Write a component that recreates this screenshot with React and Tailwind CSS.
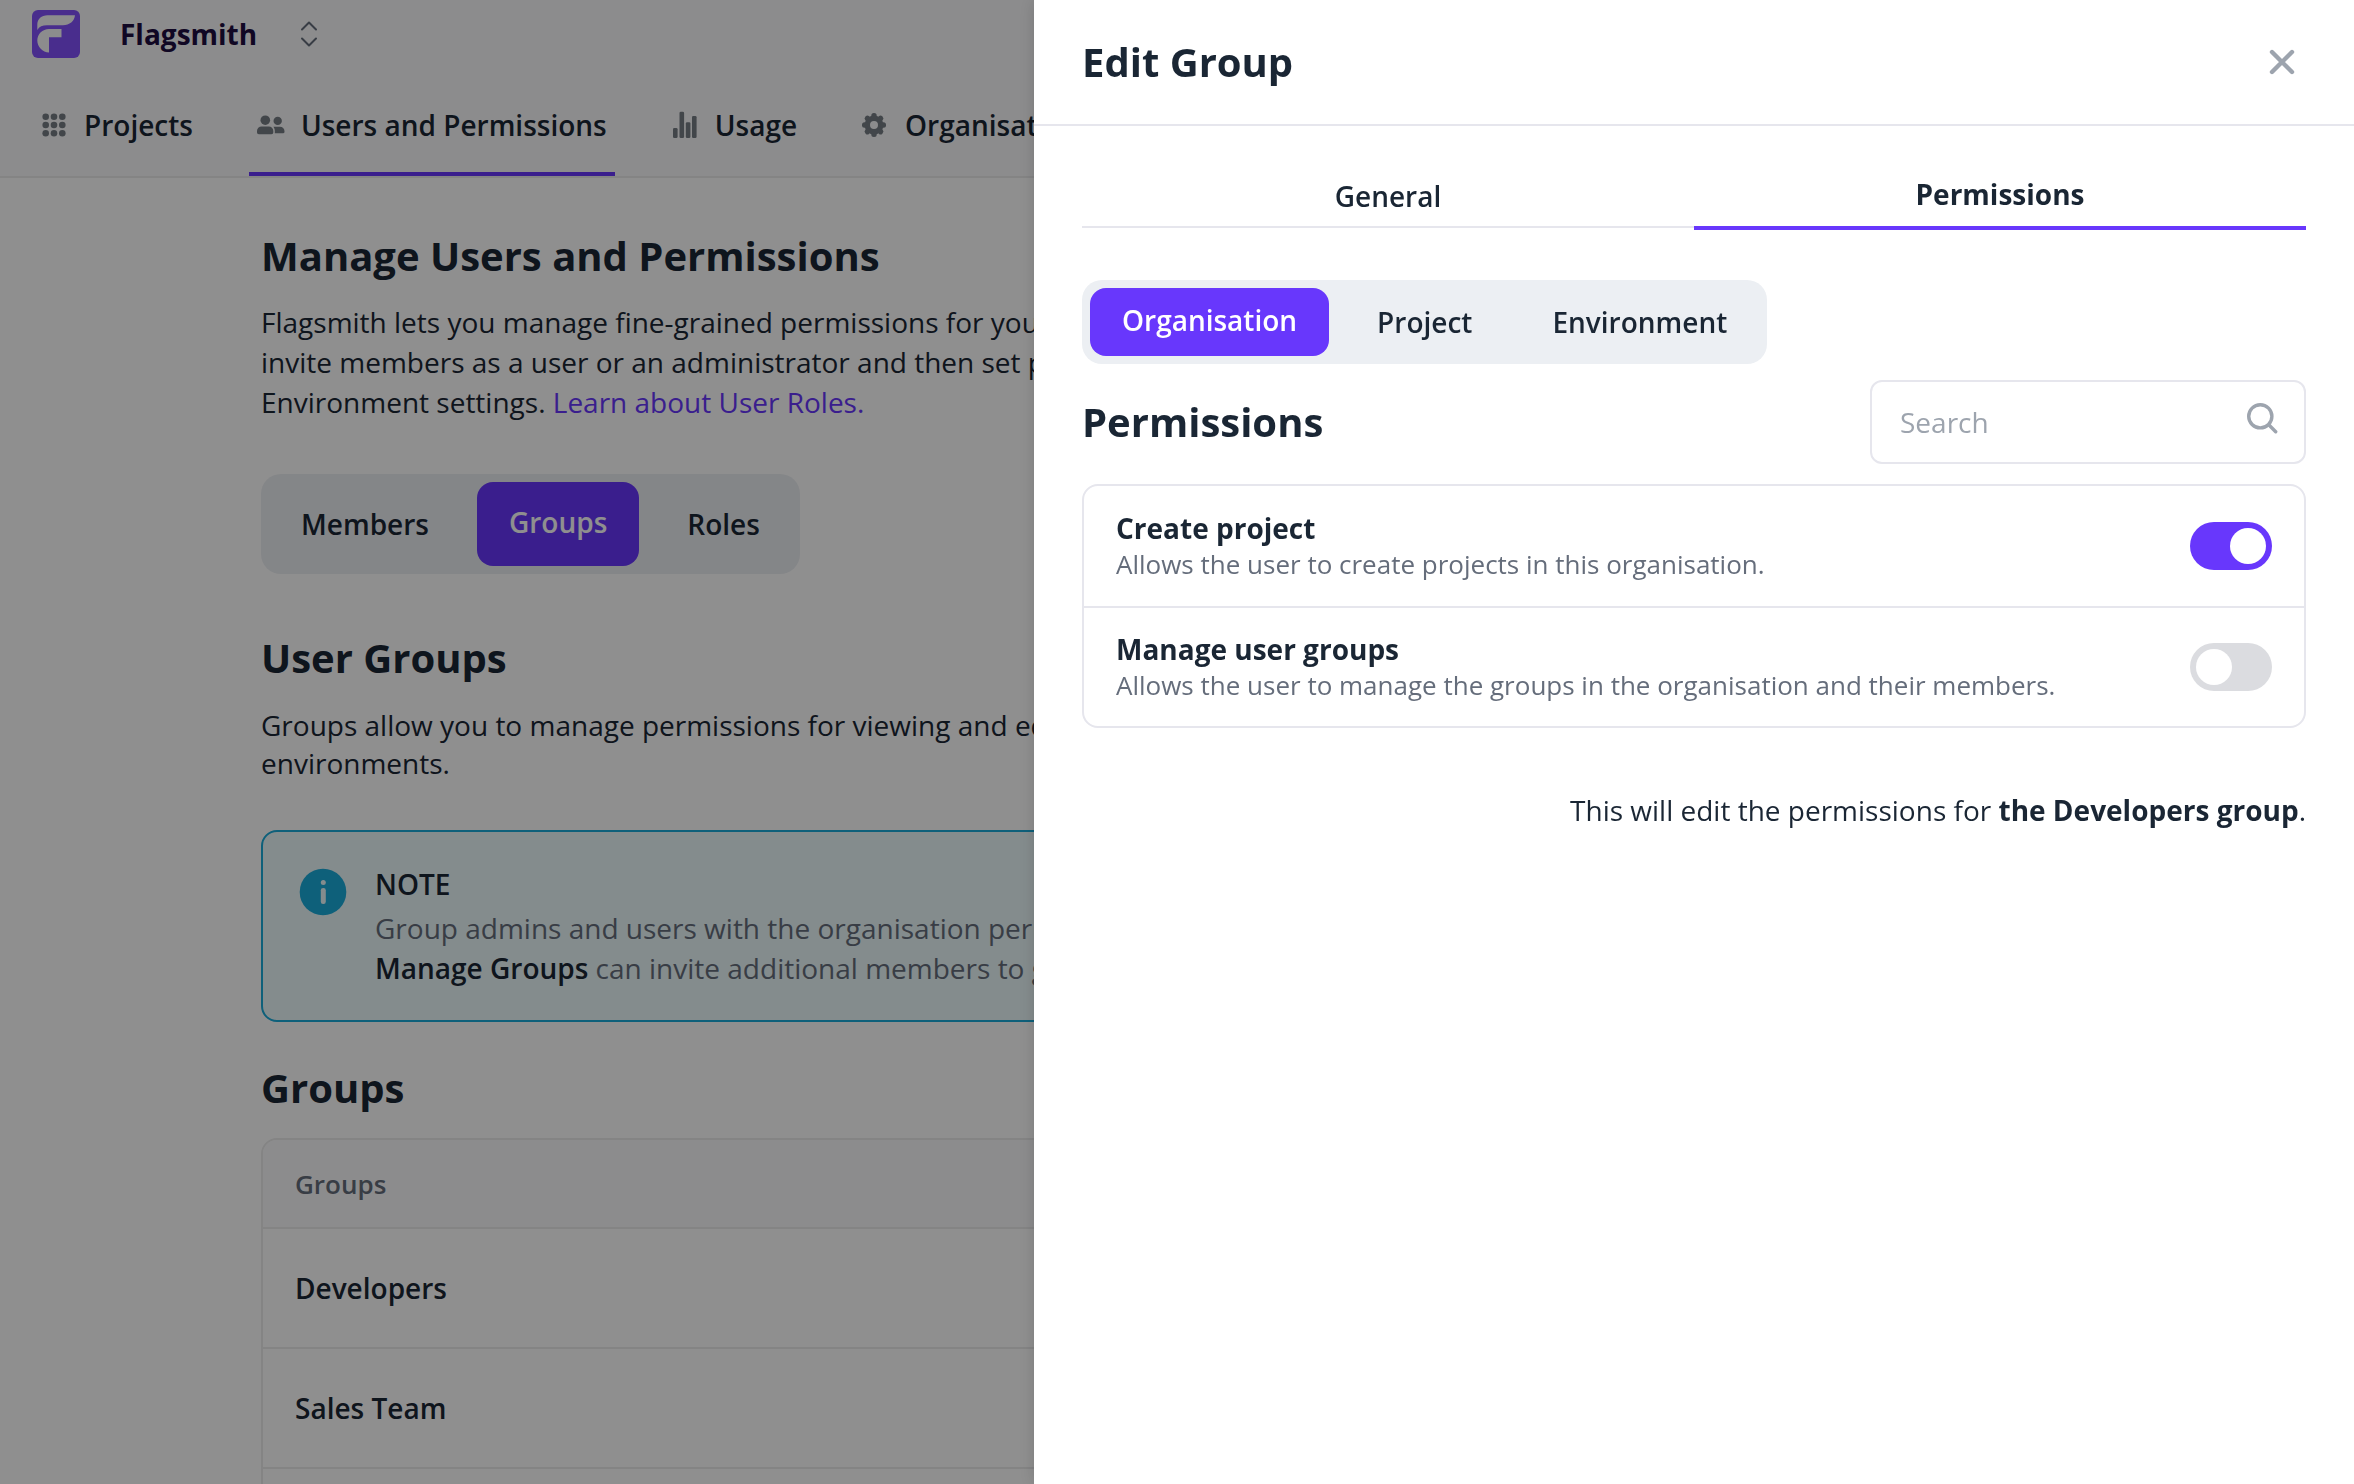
import React, { useState } from "react";

function Logo() {
  return (
    <svg viewBox="0 0 48 48" className="size-12" aria-hidden="true">
      <rect width="48" height="48" rx="6" fill="#8250fc" />
      <path d="M5.3 20v-5.2C5.3 9 9.500 5.300 15.500 5.300H43C42.600 11 37.500 15.300 31 15.300H15C10.500 15.300 7.200 16.600 5.300 20Z" fill="#fafafb" />
      <path d="M29.500 19v8.300H17V42.500C10.500 42.200 5.300 37 5.300 30.500 5.300 24 10.500 19 17 19Z" fill="#fafafb" />
    </svg>
  );
}

function GridIcon() {
  const steps = [5.7, 14, 22.3];
  return (
    <svg viewBox="0 0 28 28" className="size-7" fill="#767d85" aria-hidden="true">
      {steps.map((y) => steps.map((x) => <circle key={`${x}-${y}`} cx={x} cy={y} r="3.3" />))}
    </svg>
  );
}

function UsersIcon() {
  return (
    <svg viewBox="0 0 28 28" className="size-7" fill="#767d85" aria-hidden="true">
      <circle cx="8.3" cy="9.200" r="4.800" />
      <circle cx="20.700" cy="9.900" r="4.200" />
      <path d="M0 21.500v-1.500a4.500 4.500 0 0 1 4.500-4.500h7.300a4.500 4.500 0 0 1 4.500 4.500v1.500a1.800 1.800 0 0 1-1.800 1.800H1.800A1.800 1.800 0 0 1 0 21.500Z" />
      <path d="M16.400 15.700h6.600a4.500 4.500 0 0 1 4.500 4.500v.5a1.500 1.500 0 0 1-1.500 1.500h-8.200v-2.200c0-1.700-.5-3.200-1.400-4.300Z" />
    </svg>
  );
}

function BarsIcon() {
  return (
    <svg viewBox="0 0 28 28" className="size-7" fill="#767d85" aria-hidden="true">
      <rect x="2" y="17" width="4.600" height="10" rx="1.300" />
      <rect x="8.500" y="0.700" width="4.600" height="26.300" rx="1.300" />
      <rect x="14.800" y="11.300" width="4.600" height="15.700" rx="1.300" />
      <rect x="21" y="5" width="4.600" height="22" rx="1.300" />
    </svg>
  );
}

function GearIcon() {
  const teeth = [0, 45, 90, 135, 180, 225, 270, 315];
  return (
    <svg viewBox="0 0 28 28" className="size-7" aria-hidden="true">
      <circle cx="13" cy="14" r="6.700" fill="none" stroke="#767d85" strokeWidth="5.400" />
      {teeth.map((a) => (
        <rect key={a} x="10.300" y="2" width="5.400" height="6" rx="2.500" fill="#767d85" transform={`rotate(${a} 13 14)`} />
      ))}
    </svg>
  );
}

function InfoIcon() {
  return (
    <svg viewBox="0 0 56 56" className="size-14 shrink-0" aria-hidden="true">
      <circle cx="28" cy="28" r="23.300" fill="#1aabda" />
      <circle cx="28.300" cy="18.600" r="2.500" fill="#ecf9fb" />
      <rect x="25.800" y="24" width="5" height="16" rx="2.300" fill="#ecf9fb" />
    </svg>
  );
}

const navItems = [
  { label: "Projects", Icon: GridIcon },
  { label: "Users and Permissions", Icon: UsersIcon, active: true },
  { label: "Usage", Icon: BarsIcon },
  { label: "Organisation Settings", Icon: GearIcon },
];

function Pills({ items, value, onChange, size }) {
  return (
    <div className="flex w-fit gap-4 rounded-[20px] bg-[#eceff3] p-2">
      {items.map((item) => (
        <button
          key={item}
          type="button"
          aria-pressed={item === value}
          onClick={() => onChange(item)}
          className={`${size} rounded-2xl px-8 font-semibold ${
            item === value ? "bg-[#6837fc] pb-1 text-white" : ""
          }`}
        >
          {item}
        </button>
      ))}
    </div>
  );
}

function Page() {
  const [tab, setTab] = useState("Groups");
  return (
    <div className="min-h-full bg-white">
      <header className="border-b-2 border-[#ebebec] bg-[#fafafb] px-8">
        <div className="flex h-[68px] items-center">
          <Logo />
          <span className="ml-10 font-bold text-[#1e0d40]">Flagsmith</span>
          <button type="button" aria-label="Switch organisation" className="ml-[42px]">
            <svg viewBox="0 0 20 28" className="h-7 w-5" fill="none" stroke="#656d7b" strokeWidth="2" strokeLinecap="round" strokeLinejoin="round">
              <path d="M3 9.500 10 2.500l7 7M3 18.500l7 7 7-7" />
            </svg>
          </button>
        </div>
        <nav className="flex h-[108px] gap-12">
          {navItems.map(({ label, Icon, active }) => (
            <a
              key={label}
              href="#"
              className={`flex items-center gap-4 border-b-4 px-2 pt-2.5 font-semibold whitespace-nowrap ${
                active ? "border-[#6837fc]" : "border-transparent"
              }`}
            >
              <Icon />
              {label}
            </a>
          ))}
        </nav>
      </header>
      <main className="mx-auto max-w-[1832px] pt-[54px]">
        <h1 className="text-[40px] leading-12 font-bold">Manage Users and Permissions</h1>
        <p className="mt-[22px] leading-10 whitespace-nowrap">
          Flagsmith lets you manage fine-grained permissions for your
          <br />
          invite members as a user or an administrator and then set permissions
          <br />
          Environment settings.{" "}
          <a href="#" className="text-[#6837fc]">
            Learn about User Roles.
          </a>
        </p>
        <div className="mt-[52px]">
          <Pills items={["Members", "Groups", "Roles"]} value={tab} onChange={setTab} size="h-[84px]" />
        </div>
        <h2 className="mt-[60px] text-[40px] leading-12 font-bold">User Groups</h2>
        <p className="mt-6 leading-[38px] whitespace-nowrap">
          Groups allow you to manage permissions for viewing and editing
          <br />
          environments.
        </p>
        <div className="mt-12 flex gap-6 rounded-2xl border-2 border-[#1aabda] bg-[#ecf9fb] p-8">
          <InfoIcon />
          <div className="leading-10 whitespace-nowrap">
            <div className="font-semibold">NOTE</div>
            <p className="mt-1 text-[#656d7b]">
              Group admins and users with the organisation permission
              <br />
              <strong className="font-semibold text-[#1a2634]">Manage Groups</strong> can invite additional members to groups
            </p>
          </div>
        </div>
        <h2 className="mt-[42px] text-[40px] leading-12 font-bold">Groups</h2>
        <div className="mt-[26px] overflow-hidden rounded-2xl border-2 border-[#ebebec]">
          <table className="w-full text-left">
            <thead className="bg-[#fafafb]">
              <tr className="h-[88px] border-b-2 border-[#ebebec]">
                <th className="px-8 text-[26px] font-semibold text-[#656d7b]">Groups</th>
              </tr>
            </thead>
            <tbody>
              {["Developers", "Sales Team"].map((name) => (
                <tr key={name} className="h-[120px] border-b-2 border-[#ebebec]">
                  <td className="px-8 font-semibold">{name}</td>
                </tr>
              ))}
              <tr className="h-[120px]">
                <td />
              </tr>
            </tbody>
          </table>
        </div>
      </main>
    </div>
  );
}

const permissions = [
  { id: "create-project", title: "Create project", text: "Allows the user to create projects in this organisation.", on: true },
  { id: "manage-groups", title: "Manage user groups", text: "Allows the user to manage the groups in the organisation and their members.", on: false },
];

function PermissionRow({ id, title, text, on }) {
  return (
    <li className="flex min-h-[118px] items-center justify-between border-[#e6e6ed] px-8 not-last:border-b-2 first:min-h-[122px]">
      <label htmlFor={id} className="leading-9">
        <span className="block font-bold">{title}</span>
        <span className="block text-[26px] text-[#656d7b]">{text}</span>
      </label>
      <input
        id={id}
        type="checkbox"
        role="switch"
        defaultChecked={on}
        className="h-12 w-[82px] shrink-0 appearance-none rounded-full bg-[#dbdce0] p-1.5 before:block before:size-9 before:rounded-full before:bg-white checked:bg-[#6837fc] checked:before:ml-auto"
      />
    </li>
  );
}

function EditGroupPanel() {
  const [level, setLevel] = useState("Organisation");
  return (
    <aside role="dialog" aria-label="Edit Group" className="fixed inset-y-0 right-0 w-full max-w-[1320px] overflow-hidden bg-white shadow-[0_0_16px_rgba(0,0,0,0.15)]">
      <div className="flex h-[126px] items-center justify-between border-b-2 border-[#e6e6ed] px-12">
        <h2 className="text-[40px] leading-12 font-bold">Edit Group</h2>
        <button type="button" aria-label="Close" className="p-2">
          <svg viewBox="0 0 32 32" className="size-8" fill="none" stroke="#9da4ae" strokeWidth="4.400" strokeLinecap="round">
            <path d="M6 6l20 20M26 6 6 26" />
          </svg>
        </button>
      </div>
      <div className="px-12 pt-9">
        <div role="tablist" className="grid grid-cols-2 items-start">
          <button type="button" role="tab" aria-selected="false" className="h-[66px] border-b-2 border-[#e6e6ed] pt-1 font-semibold">
            General
          </button>
          <button type="button" role="tab" aria-selected="true" className="h-[68px] border-b-4 border-[#6837fc] font-bold">
            Permissions
          </button>
        </div>
        <div className="mt-[50px]">
          <Pills items={["Organisation", "Project", "Environment"]} value={level} onChange={setLevel} size="h-[68px]" />
        </div>
        <div className="mt-4 flex items-center justify-between">
          <h3 className="text-[40px] leading-12 font-bold">Permissions</h3>
          <div className="relative w-[436px]">
            <input
              type="search"
              aria-label="Search"
              placeholder="Search"
              className="block h-[84px] w-full rounded-xl border-2 border-[#e6e6ed] pr-20 pl-7 placeholder:text-[#9da4ae]"
            />
            <svg viewBox="0 0 32 32" className="pointer-events-none absolute top-[22px] right-7 size-8" fill="none" stroke="#9da4ae" strokeWidth="3.400" strokeLinecap="round" aria-hidden="true">
              <circle cx="14.300" cy="14.300" r="11.600" />
              <path d="M23 23l6.700 6.700" />
            </svg>
          </div>
        </div>
        <ul className="mt-5 rounded-2xl border-2 border-[#e6e6ed]">
          {permissions.map((p) => (
            <PermissionRow key={p.id} {...p} />
          ))}
        </ul>
        <p className="mt-[62px] text-right leading-10">
          This will edit the permissions for <b className="font-bold">the Developers group</b>.
        </p>
      </div>
    </aside>
  );
}

export default function App() {
  return (
    <div className="h-screen overflow-hidden font-['Open_Sans',sans-serif] text-[28px] leading-10 text-[#1a2634]">
      <Page />
      <div className="fixed inset-0 bg-black/44" />
      <EditGroupPanel />
    </div>
  );
}
